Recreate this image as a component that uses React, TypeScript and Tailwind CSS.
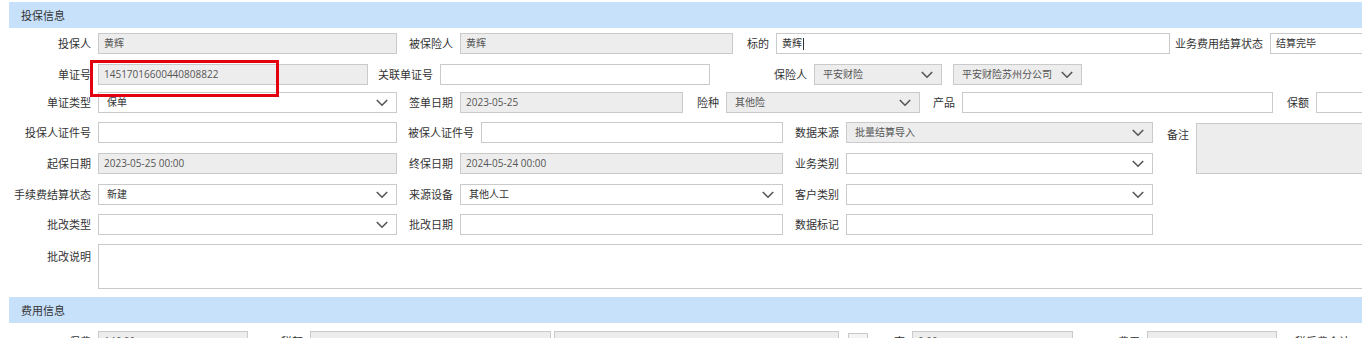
import React from "react";

const CJK = "font-['Noto_Sans_CJK_SC',sans-serif]";
const TXT = "font-['Open_Sans','Noto_Sans_CJK_SC',sans-serif]";

function Chevron() {
  return (
    <svg width="12" height="8" viewBox="0 0 12 8" fill="none" className="shrink-0 text-[#555]">
      <path d="M0.8 1L6 6.2L11.2 1" stroke="currentColor" strokeWidth="1.6" />
    </svg>
  );
}

function Label({ className = "", children }: { className?: string; children?: React.ReactNode }) {
  return (
    <div className={`shrink-0 text-right pr-[7px] text-[11px] leading-[21px] text-[#333] whitespace-nowrap overflow-hidden ${CJK} ${className}`}>
      {children}
    </div>
  );
}

function Field({
  className = "",
  value,
  grey,
  select,
  cursor,
}: {
  className?: string;
  value?: string;
  grey?: boolean;
  select?: boolean;
  cursor?: boolean;
}) {
  return (
    <div
      className={`shrink-0 h-[21px] border border-[#cacaca] flex items-center ${select ? "pl-[8px] pr-[8px]" : "pl-[5px] pr-[5px]"} ${grey ? "bg-[#ededed] text-[#555]" : "bg-white text-[#333]"} text-[10px] overflow-hidden ${TXT} ${className}`}
    >
      <span className="flex-1 whitespace-nowrap overflow-hidden flex items-center">
        {value}
        {cursor && <span className="inline-block w-px h-[12px] bg-[#333] ml-px" />}
      </span>
      {select && <Chevron />}
    </div>
  );
}

function Header({ title, className = "" }: { title: string; className?: string }) {
  return (
    <div className={`h-[26px] bg-[#c8e1fb] flex items-center pl-[12px] text-[11px] text-[#333] ${CJK} ${className}`}>
      {title}
    </div>
  );
}

export default function App() {
  return (
    <div className="relative w-[1362px] h-[338px] overflow-hidden bg-white">
      <div className="w-[1420px] pl-[9px] pt-[2px]">
        <Header title="投保信息" />

        {/* row 1 */}
        <div className="flex items-center mt-[5px]">
          <Label className="w-[89px]">投保人</Label>
          <Field className="w-[299px]" grey value="黄辉" />
          <Label className="w-[63px]">被保险人</Label>
          <Field className="w-[273px]" grey value="黄辉" />
          <Label className="w-[43px]">标的</Label>
          <Field className="w-[394px]" value="黄辉" cursor />
          <Label className="w-[100px]">业务费用结算状态</Label>
          <Field className="w-[120px]" value="结算完毕" />
        </div>

        {/* row 2 */}
        <div className="flex items-center mt-[10px]">
          <Label className="w-[89px]">单证号</Label>
          <Field className="w-[270px]" grey value="14517016600440808822" />
          <Label className="w-[72px]">关联单证号</Label>
          <Field className="w-[270px]" />
          <Label className="w-[104px]">保险人</Label>
          <Field className="w-[128px]" grey select value="平安财险" />
          <div className="w-[11px] shrink-0" />
          <Field className="w-[129px]" grey select value="平安财险苏州分公司" />
        </div>

        {/* row 3 */}
        <div className="flex items-center mt-[7px]">
          <Label className="w-[89px]">单证类型</Label>
          <Field className="w-[299px]" select value="保单" />
          <Label className="w-[63px]">签单日期</Label>
          <Field className="w-[223px]" grey value="2023-05-25" />
          <Label className="w-[43px]">险种</Label>
          <Field className="w-[194px]" grey select value="其他险" />
          <Label className="w-[42px]">产品</Label>
          <Field className="w-[311px]" />
          <Label className="w-[43px]">保额</Label>
          <Field className="w-[80px]" />
        </div>

        {/* rows 4-5 with remark */}
        <div className="flex mt-[9px]">
          <div className="flex flex-col">
            <div className="flex items-center">
              <Label className="w-[89px]">投保人证件号</Label>
              <Field className="w-[299px]" />
              <Label className="w-[84px]">被保人证件号</Label>
              <Field className="w-[302px]" />
              <Label className="w-[63px]">数据来源</Label>
              <Field className="w-[307px]" grey select value="批量结算导入" />
            </div>
            <div className="flex items-center mt-[10px]">
              <Label className="w-[89px]">起保日期</Label>
              <Field className="w-[299px]" grey value="2023-05-25 00:00" />
              <Label className="w-[63px]">终保日期</Label>
              <Field className="w-[323px]" grey value="2024-05-24 00:00" />
              <Label className="w-[63px]">业务类别</Label>
              <Field className="w-[307px]" select />
            </div>
          </div>
          <Label className="w-[43px] pt-[2px]">备注</Label>
          <div className="shrink-0 w-[220px] h-[51px] mt-px border border-[#cacaca] bg-[#ededed]" />
        </div>

        {/* row 6 */}
        <div className="flex items-center mt-[10px]">
          <Label className="w-[89px]">手续费结算状态</Label>
          <Field className="w-[299px]" select value="新建" />
          <Label className="w-[63px]">来源设备</Label>
          <Field className="w-[323px]" select value="其他人工" />
          <Label className="w-[63px]">客户类别</Label>
          <Field className="w-[307px]" select />
        </div>

        {/* row 7 */}
        <div className="flex items-center mt-[9px]">
          <Label className="w-[89px]">批改类型</Label>
          <Field className="w-[299px]" select />
          <Label className="w-[63px]">批改日期</Label>
          <Field className="w-[323px]" />
          <Label className="w-[63px]">数据标记</Label>
          <Field className="w-[307px]" />
        </div>

        {/* row 8 */}
        <div className="flex mt-[9px]">
          <Label className="w-[89px] pt-[2px]">批改说明</Label>
          <div className="shrink-0 w-[1300px] h-[45px] border border-[#cacaca] bg-white" />
        </div>

        <Header title="费用信息" className="mt-[8px]" />

        {/* fee row */}
        <div className="flex items-start mt-[8px]">
          <Label className="w-[89px]">保费</Label>
          <Field className="w-[150px]" grey value="146.00" />
          <Label className="w-[62px]">税额</Label>
          <Field className="w-[241px]" grey />
          <div className="w-[3px] shrink-0" />
          <Field className="w-[285px]" grey />
          <div className="w-[9px] shrink-0" />
          <div className="shrink-0 w-[20px] h-[20px] mt-[2px] border border-[#cacaca] bg-[#f4f4f4]" />
          <Label className="w-[44px]">率</Label>
          <Field className="w-[161px]" grey value="0.00" />
          <Label className="w-[74px]">费用</Label>
          <Field className="w-[130px]" grey />
          <Label className="w-[80px] text-left pl-[4px]">1 税后费合计</Label>
        </div>
      </div>

      {/* highlight annotation */}
      <div className="absolute left-[90px] top-[60px] w-[189px] h-[37px] border-[3px] border-[#e3000f]" />
    </div>
  );
}
